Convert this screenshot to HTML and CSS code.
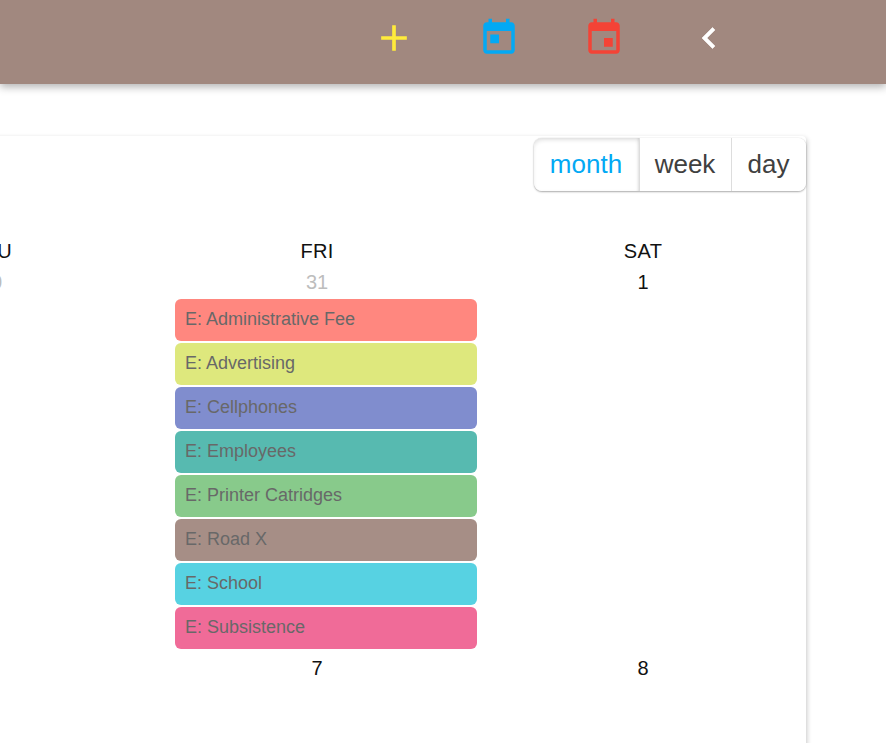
FILE: index.html
```html
<!DOCTYPE html>
<html lang="en">
<head>
<meta charset="utf-8">
<title>Calendar</title>
<link rel="stylesheet" href="styles.css">
</head>
<body>
<header class="appbar">
  <button class="icon-btn"><svg class="icon plus" viewBox="0 0 24 24"><path d="M19 13h-6v6h-2v-6H5v-2h6V5h2v6h6v2z"/></svg></button>
  <button class="icon-btn"><svg class="icon blue" viewBox="0 0 24 24"><path d="M19 3h-1V1h-2v2H8V1H6v2H5c-1.11 0-1.99.9-1.99 2L3 19c0 1.1.89 2 2 2h14c1.1 0 2-.9 2-2V5c0-1.1-.9-2-2-2zm0 16H5V8h14v11zM7 10h5v5H7z"/></svg></button>
  <button class="icon-btn"><svg class="icon red" viewBox="0 0 24 24"><path d="M17 12h-5v5h5v-5zM16 1v2H8V1H6v2H5c-1.11 0-1.99.9-1.99 2L3 19c0 1.1.89 2 2 2h14c1.1 0 2-.9 2-2V5c0-1.1-.9-2-2-2h-1V1h-2zm3 18H5V8h14v11z"/></svg></button>
  <button class="icon-btn"><svg class="icon white" viewBox="0 0 24 24"><path d="M15.41 7.41L14 6l-6 6 6 6 1.41-1.41L10.83 12z"/></svg></button>
</header>
<main class="card">
  <div class="toolbar">
    <div class="view-group">
      <button class="view active month">month</button>
      <button class="view week">week</button>
      <button class="view day">day</button>
    </div>
  </div>
  <div class="grid heads">
    <div>THU</div><div>FRI</div><div>SAT</div>
  </div>
  <div class="grid nums first">
    <div class="muted">30</div><div class="muted">31</div><div>1</div>
  </div>
  <div class="grid">
    <div></div>
    <div class="events">
      <div class="event red-e">E: Administrative Fee</div>
      <div class="event lime-e">E: Advertising</div>
      <div class="event indigo-e">E: Cellphones</div>
      <div class="event teal-e">E: Employees</div>
      <div class="event green-e">E: Printer Catridges</div>
      <div class="event brown-e">E: Road X</div>
      <div class="event cyan-e">E: School</div>
      <div class="event pink-e">E: Subsistence</div>
    </div>
    <div></div>
  </div>
  <div class="grid nums">
    <div></div><div>7</div><div>8</div>
  </div>
</main>
</body>
</html>
```
FILE: styles.css
```css
html, body {
  margin: 0;
  height: 743px;
  overflow: hidden;
  background: #fff;
  font-family: "Liberation Sans", Arial, sans-serif;
}
.appbar {
  height: 84px;
  background: #a1887f;
  box-shadow: 0 3px 8px rgba(0, 0, 0, .3);
  display: flex;
  justify-content: flex-end;
  align-items: center;
  padding-right: 125px;
  position: relative;
}
.icon-btn {
  width: 105px;
  height: 44px;
  padding: 0;
  border: 0;
  background: none;
  display: flex;
  align-items: center;
  justify-content: center;
  margin-top: -9px;
}
.icon { width: 42px; height: 42px; display: block; }
.plus { fill: #ffeb3b; width: 44px; height: 44px; }
.blue { fill: #03a9f4; }
.red { fill: #f44336; }
.white { fill: #fff; stroke: #fff; stroke-width: .35; }
.card {
  width: 978px;
  height: 640px;
  margin: 52px 0 0 -172px;
  padding-top: 2px;
  box-sizing: border-box;
  background: #fff;
  border-radius: 4px;
  box-shadow: 1px 2px 5px rgba(0, 0, 0, .22);
}
.toolbar { display: flex; justify-content: flex-end; }
.view-group {
  display: flex;
  height: 53px;
  border-radius: 8px;
  background: #fff;
  box-shadow: 0 1px 2px rgba(0, 0, 0, .32), 0 0 1px rgba(0, 0, 0, .2);
}
.view {
  border: 0;
  border-left: 1px solid #ddd;
  background: #fff;
  padding: 0 1px 0 0;
  font: 26px "Liberation Sans", Arial, sans-serif;
  color: #404040;
}
.view.month { width: 105px; border-left: 0; border-radius: 8px 0 0 8px; }
.view.week { width: 92px; }
.view.day { width: 75px; border-radius: 0 8px 8px 0; }
.view.active {
  color: #03a9f4;
  box-shadow: inset 0 3px 4px -1px rgba(0, 0, 0, .12), inset -2px 0 3px -1px rgba(0, 0, 0, .1);
}
.grid {
  display: grid;
  grid-template-columns: repeat(3, 326px);
  text-align: center;
  color: #111;
  font-size: 20px;
}
.heads { margin-top: 47px; line-height: 26px; letter-spacing: .3px; }
.nums { line-height: 35px; }
.nums.first { height: 35px; line-height: 37px; }
.muted { color: #bdbdbd; }
.events {
  display: flex;
  flex-direction: column;
  gap: 2px;
  padding: 0 3px 2px 21px;
  text-align: left;
}
.event {
  height: 42px;
  line-height: 40px;
  padding-left: 10px;
  border-radius: 6px;
  font-size: 18px;
  color: #5f5f5f;
  opacity: .94;
}
.red-e { background: #ff8078; }
.lime-e { background: #dce775; }
.indigo-e { background: #7986cb; }
.teal-e { background: #4db6ac; }
.green-e { background: #81c784; }
.brown-e { background: #a1887f; }
.cyan-e { background: #4dd0e1; }
.pink-e { background: #f06292; }
```
